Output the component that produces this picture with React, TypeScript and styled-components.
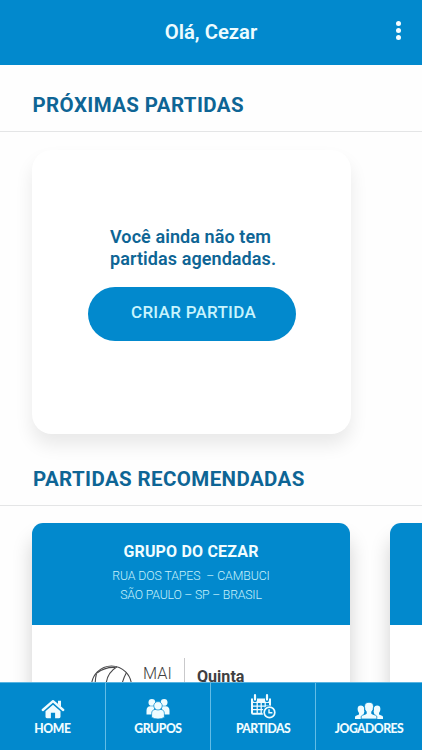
import React from "react";
import styled, { createGlobalStyle } from "styled-components";

const BLUE = "#0289cd";
const NAVY = "#0e6595";

const GlobalStyle = createGlobalStyle`
  *, *::before, *::after { box-sizing: border-box; }
  body { margin: 0; background: #fefefe; }
  h1, h2, h3, p { margin: 0; }
  button { border: 0; font: inherit; padding: 0; cursor: pointer; }
`;

const Screen = styled.div`
  width: 422px;
  height: 750px;
  display: flex;
  flex-direction: column;
  overflow: hidden;
  background: #fefefe;
  font-family: Roboto, "Liberation Sans", sans-serif;
`;

const Header = styled.header`
  flex: none;
  height: 64.5px;
  background: ${BLUE};
  display: grid;
  grid-template-columns: 48px 1fr 48px;
  align-items: center;
`;

const HeaderTitle = styled.h1`
  grid-column: 2;
  text-align: center;
  color: #eefcff;
  font-size: 20.3px;
  font-weight: 600;
  line-height: 24px;
`;

const MenuButton = styled.button`
  height: 30px;
  margin-bottom: 4px;
  background: transparent;
  display: flex;
  flex-direction: column;
  align-items: center;
  justify-content: center;
  gap: 2px;
`;

const Dot = styled.span`
  width: 5px;
  height: 5px;
  border-radius: 50%;
  background: #f4fdff;
`;

const Content = styled.main`
  flex: 1;
  min-height: 0;
  overflow: hidden;
`;

const SectionTitle = styled.h2<{ $height: number; $inset: number; $track: number }>`
  height: ${(p) => p.$height}px;
  padding: 0 0 14px ${(p) => p.$inset}px;
  border-bottom: 1px solid #e4e5e6;
  display: flex;
  align-items: flex-end;
  color: ${NAVY};
  font-size: 20.5px;
  font-weight: 700;
  line-height: 24px;
  letter-spacing: ${(p) => p.$track}px;
`;

const EmptyCard = styled.section`
  width: 319px;
  height: 284px;
  margin: 18px 0 0 32px;
  padding-top: 76px;
  border-radius: 20px;
  background: #fff;
  box-shadow: 0 11px 18px rgba(0, 0, 0, 0.085);
`;

const EmptyText = styled.p`
  margin-left: 78px;
  color: ${NAVY};
  font-size: 18px;
  font-weight: 600;
  line-height: 21.5px;
  letter-spacing: 0.08px;
`;

const CreateButton = styled.button`
  display: block;
  width: 208px;
  height: 54px;
  margin: 18px 0 0 56px;
  padding: 0 0 4px 3px;
  border-radius: 27px;
  background: ${BLUE};
  color: #c8f4fd;
  font-size: 17px;
  font-weight: 500;
  letter-spacing: 0.28px;
`;

const MatchRow = styled.div`
  display: flex;
  gap: 40px;
  padding: 17px 0 0 32px;
`;

const MatchCard = styled.article`
  flex: none;
  width: 318px;
  height: 280px;
  border-radius: 11px;
  background: #fff;
  box-shadow: 0 16px 20px rgba(0, 0, 0, 0.18);
`;

const MatchHead = styled.div`
  height: 101.5px;
  padding-top: 19px;
  border-radius: 11px 11px 0 0;
  background: ${BLUE};
  text-align: center;
`;

const MatchName = styled.h3`
  color: #f1fdff;
  font-size: 16px;
  font-weight: 700;
  line-height: 20px;
  letter-spacing: 0.18px;
`;

const Address = styled.div`
  margin-top: 5px;
  color: #c6f1fc;
  font-size: 12.3px;
  font-weight: 300;
  line-height: 18.5px;
  white-space: pre;
`;

const AddressLine = styled.p<{ $track: number }>`
  letter-spacing: ${(p) => p.$track}px;
`;

const MatchBody = styled.div`
  display: flex;
  align-items: flex-start;
  padding: 33px 0 0 59px;
  color: #3f3f41;
`;

const BallIcon = styled.svg`
  flex: none;
  width: 42px;
  height: 42px;
  margin-top: 7px;
`;

const Month = styled.span`
  width: 41px;
  margin: 8px 0 0 10px;
  font-size: 16.3px;
  font-weight: 300;
  line-height: 16px;
`;

const DateRule = styled.span`
  width: 1px;
  height: 60px;
  background: #c9c9cb;
`;

const Weekday = styled.span`
  margin: 11px 0 0 12px;
  font-size: 16.1px;
  font-weight: 700;
  line-height: 16px;
`;

const NavBar = styled.nav`
  flex: none;
  height: 68px;
  display: grid;
  grid-template-columns: 106px 105px 105px 106px;
  border-top: 1px solid #58b4e1;
  background: ${BLUE};
`;

const NavItem = styled.button`
  display: flex;
  flex-direction: column;
  align-items: center;
  justify-content: flex-end;
  padding-bottom: 14px;
  background: ${BLUE};
  border-right: 1px solid #62bce6;
  color: #effcff;
  &:last-child { border-right: 0; }
`;

const NavLabel = styled.span<{ $track: number }>`
  margin-top: 3px;
  font-family: Lato, "Open Sans", sans-serif;
  font-size: 12.2px;
  font-weight: 900;
  line-height: 14px;
  letter-spacing: ${(p) => p.$track}px;
`;

const NavIcon = styled.svg`
  display: block;
  overflow: visible;
`;

const Home = () => (
  <NavIcon width="24" height="20" viewBox="0 0 24 20">
    <path d="M1.8 11 12 2.2 22.2 11" fill="none" stroke="currentColor" strokeWidth="2.4" strokeLinecap="round" strokeLinejoin="round" />
    <path d="M17 1.8h3v6l-3-2.6z" fill="currentColor" />
    <path d="M12 5.8 19.5 12.3v5.5q0 1.4-1.4 1.4h-4v-5.4H9.9v5.4h-4q-1.4 0-1.4-1.4v-5.5z" fill="currentColor" />
  </NavIcon>
);

const Groups = () => (
  <NavIcon width="24" height="20" viewBox="0 0 24 20" fill="currentColor">
    <circle cx="5.9" cy="3.4" r="3.4" />
    <circle cx="18.1" cy="3.4" r="3.4" />
    <path d="M.5 15.5v-3.7Q.5 7.2 4.3 7.2h3.8v8.3zM23.5 15.5v-3.7q0-4.6-3.8-4.6h-3.8v8.3z" />
    <g stroke={BLUE} strokeWidth="0.7">
      <path d="M5.6 18.4v-3.6q0-4.4 4.2-4.4h4.4q4.2 0 4.2 4.4v3.6q-3 1.6-6.4 1.6t-6.4-1.6z" />
      <circle cx="12" cy="6.8" r="4.2" />
    </g>
  </NavIcon>
);

const Matches = () => (
  <NavIcon width="26" height="25" viewBox="0 0 26 25">
    <path d="M1 4.5h20v16.3H3q-2 0-2-2z" fill="currentColor" />
    <path d="M3 9h16v9.8H3z" fill={BLUE} />
    <path d="M7.2 8v12M11.2 8v12M15.2 8v8M2 12.2h18M2 15.7h13" fill="none" stroke="currentColor" strokeWidth="1.3" />
    <path d="M5 1.6v4.6M17 1.6v4.6" stroke={BLUE} strokeWidth="4" strokeLinecap="round" />
    <path d="M5 1.2v4.4M17 1.2v4.4" stroke="currentColor" strokeWidth="2.2" strokeLinecap="round" />
    <circle cx="19.5" cy="18.4" r="7" fill={BLUE} />
    <circle cx="19.5" cy="18.4" r="5.3" fill="none" stroke="currentColor" strokeWidth="1.7" />
    <path d="M19 15.3v3.5h3.4" fill="none" stroke="currentColor" strokeWidth="1.4" />
  </NavIcon>
);

const Players = () => (
  <NavIcon width="28" height="17" viewBox="0 0 28 17" fill="currentColor">
    <path d="M8 17H0v-1.8q0-1 1-1.4l3-1.3v-1.4Q2.6 9.6 2.6 7 2.6 3.6 6 3.6q2.2 0 3 1.8-.2 2 .4 4l-.8 3z" />
    <path d="M20 17h8v-1.8q0-1-1-1.4l-3-1.3v-1.4q1.4-1.5 1.4-4.1 0-3.4-3.4-3.4-2.2 0-3 1.8.2 2-.4 4l.8 3z" />
    <path d="M6.2 17v-2.2q0-1 1-1.4l4.1-1.7V9.8Q9.5 8 9.5 4.7 9.5.3 14 .3t4.5 4.4q0 3.3-1.8 5.1v1.9l4.1 1.7q1 .4 1 1.4V17z" stroke={BLUE} strokeWidth=".8" />
  </NavIcon>
);

const Ball = () => (
  <BallIcon viewBox="0 0 42 42" fill="none" stroke="#48484a" strokeWidth="1.1">
    <circle cx="20.5" cy="21" r="20" />
    <path d="M5.5 8.5Q2.5 20 6.5 34M26 1.8Q11 11 16.5 32M35.5 7.5Q28.5 20 29 39M6 8Q14 1.8 24 2.4" />
  </BallIcon>
);

const NAV_ITEMS = [
  { label: "HOME", track: -0.4, icon: <Home /> },
  { label: "GRUPOS", track: -0.45, icon: <Groups /> },
  { label: "PARTIDAS", track: -0.55, icon: <Matches /> },
  { label: "JOGADORES", track: -0.55, icon: <Players /> },
];

export default function App() {
  return (
    <>
      <GlobalStyle />
      <Screen>
        <Header>
          <HeaderTitle>Olá, Cezar</HeaderTitle>
          <MenuButton aria-label="Menu">
            <Dot />
            <Dot />
            <Dot />
          </MenuButton>
        </Header>
        <Content>
          <SectionTitle $height={67.5} $inset={32.5} $track={0.38}>PRÓXIMAS PARTIDAS</SectionTitle>
          <EmptyCard>
            <EmptyText>
              Você ainda não tem
              <br />
              partidas agendadas.
            </EmptyText>
            <CreateButton>CRIAR PARTIDA</CreateButton>
          </EmptyCard>
          <SectionTitle $height={72} $inset={33} $track={0.38}>PARTIDAS RECOMENDADAS</SectionTitle>
          <MatchRow>
            <MatchCard>
              <MatchHead>
                <MatchName>GRUPO DO CEZAR</MatchName>
                <Address>
                  <AddressLine $track={-0.08}>{"RUA DOS TAPES  – CAMBUCI"}</AddressLine>
                  <AddressLine $track={-0.2}>SÃO PAULO – SP – BRASIL</AddressLine>
                </Address>
              </MatchHead>
              <MatchBody>
                <Ball />
                <Month>MAI</Month>
                <DateRule />
                <Weekday>Quinta</Weekday>
              </MatchBody>
            </MatchCard>
            <MatchCard>
              <MatchHead />
            </MatchCard>
          </MatchRow>
        </Content>
        <NavBar>
          {NAV_ITEMS.map((item) => (
            <NavItem key={item.label}>
              {item.icon}
              <NavLabel $track={item.track}>{item.label}</NavLabel>
            </NavItem>
          ))}
        </NavBar>
      </Screen>
    </>
  );
}
